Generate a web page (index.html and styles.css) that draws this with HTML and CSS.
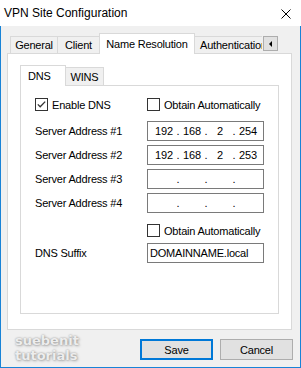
FILE: index.html
```html
<!DOCTYPE html>
<html>
<head>
<meta charset="utf-8">
<link rel="stylesheet" href="styles.css">
</head>
<body>
<div class="window">
  <div class="titlebar">
    <span class="title">VPN Site Configuration</span>
    <svg class="close" width="10" height="10" viewBox="0 0 10 10"><path d="M0.5 0.5 L9.5 9.5 M9.5 0.5 L0.5 9.5" stroke="#000" stroke-width="1" fill="none"/></svg>
  </div>
  <div class="body">
    <div class="tabs">
      <div class="tab tab-general">General</div>
      <div class="tab tab-client">Client</div>
      <div class="tab active">Name Resolution</div>
      <div class="tab tab-auth">Authentication</div>
      <div class="scroll-btn"><span class="tri"></span></div>
    </div>
    <div class="panel">
      <div class="subtabs">
        <div class="subtab active">DNS</div>
        <div class="subtab subtab-wins">WINS</div>
      </div>
      <div class="subpanel">
        <div class="row row-check">
          <div class="check label-col"><span class="box"><svg width="11" height="11" viewBox="0 0 11 11"><polyline points="1.8,5.4 4.2,7.8 9.2,2.6" fill="none" stroke="#333" stroke-width="1.3"/></svg></span>Enable DNS</div>
          <div class="check"><span class="box"></span>Obtain Automatically</div>
        </div>
        <div class="row row-field first">
          <span class="label-col">Server Address #1</span>
          <div class="field ip"><span>192</span><span>.</span><span>168</span><span>.</span><span>2</span><span>.</span><span>254</span></div>
        </div>
        <div class="row row-field">
          <span class="label-col">Server Address #2</span>
          <div class="field ip"><span>192</span><span>.</span><span>168</span><span>.</span><span>2</span><span>.</span><span>253</span></div>
        </div>
        <div class="row row-field">
          <span class="label-col">Server Address #3</span>
          <div class="field ip"><span></span><span>.</span><span></span><span>.</span><span></span><span>.</span><span></span></div>
        </div>
        <div class="row row-field">
          <span class="label-col">Server Address #4</span>
          <div class="field ip"><span></span><span>.</span><span></span><span>.</span><span></span><span>.</span><span></span></div>
        </div>
        <div class="row row-check second">
          <span class="label-col"></span>
          <div class="check"><span class="box"></span>Obtain Automatically</div>
        </div>
        <div class="row row-field suffix">
          <span class="label-col">DNS Suffix</span>
          <div class="field text">DOMAINNAME.local</div>
        </div>
      </div>
    </div>
    <div class="footer">
      <div class="watermark">suebenit<br>tutorials</div>
      <div class="buttons">
        <button class="btn primary">Save</button>
        <button class="btn">Cancel</button>
      </div>
    </div>
  </div>
</div>
</body>
</html>
```
FILE: styles.css
```css
html, body {
  margin: 0;
  padding: 0;
}
body {
  width: 301px;
  height: 368px;
  overflow: hidden;
  background: #fff;
  color: #000;
  font-family: "Liberation Sans", Arial, sans-serif;
  font-size: 11px;
  letter-spacing: -0.2px;
}
.window {
  width: 301px;
  height: 368px;
}
.titlebar {
  height: 26px;
  box-sizing: border-box;
  display: flex;
  align-items: center;
  justify-content: space-between;
  padding: 0 10px 0 4px;
  background: #fff;
}
.title {
  font-size: 12px;
  letter-spacing: 0;
}
.close {
  display: block;
  margin-top: 2px;
}
.body {
  height: 342px;
  box-sizing: border-box;
  border: 1px solid #1883d7;
  border-top: none;
  background: #f0f0f0;
  padding: 7px 7px 0 6px;
}
.tabs {
  display: flex;
  align-items: flex-end;
  height: 20px;
  padding-left: 3px;
}
.tab {
  height: 17px;
  box-sizing: border-box;
  border: 1px solid #d9d9d9;
  border-bottom: none;
  background: #f0f0f0;
  display: flex;
  align-items: center;
  justify-content: center;
  white-space: nowrap;
  margin-left: -1px;
  flex: none;
}
.tab-general {
  width: 48px;
  margin-left: 0;
}
.tab-client {
  width: 43px;
}
.tab.active {
  width: 96px;
  height: 21px;
  margin-bottom: -1px;
  padding-bottom: 1px;
  background: #fff;
  position: relative;
  z-index: 1;
}
.tab-auth {
  width: 68px;
  border-right: none;
  overflow: hidden;
  justify-content: flex-start;
  padding-left: 5px;
}
.scroll-btn {
  width: 15px;
  height: 15px;
  box-sizing: border-box;
  margin-left: 1px;
  align-self: flex-start;
  margin-top: 3px;
  border: 1px solid #adadad;
  background: #e1e1e1;
  display: flex;
  align-items: center;
  justify-content: center;
  flex: none;
}
.tri {
  width: 0;
  height: 0;
  border-top: 3px solid transparent;
  border-bottom: 3px solid transparent;
  border-right: 3px solid #000;
  margin-left: -1px;
}
.panel {
  width: 285px;
  height: 277px;
  box-sizing: border-box;
  border: 1px solid #d9d9d9;
  background: #fff;
  padding: 11px 0 0 12px;
}
.subtabs {
  display: flex;
  align-items: flex-end;
  height: 20px;
}
.subtab {
  height: 18px;
  box-sizing: border-box;
  border: 1px solid #d9d9d9;
  border-bottom: none;
  background: #f0f0f0;
  display: flex;
  align-items: center;
  justify-content: center;
  flex: none;
}
.subtab.active {
  width: 46px;
  height: 21px;
  margin-bottom: -1px;
  background: #fff;
  justify-content: flex-start;
  padding-left: 7px;
  position: relative;
  z-index: 1;
}
.subtab-wins {
  width: 39px;
  margin-left: -1px;
}
.subpanel {
  width: 259px;
  height: 229px;
  box-sizing: border-box;
  border: 1px solid #d9d9d9;
  background: #fff;
  padding: 11px 0 0 14px;
}
.row {
  display: flex;
  align-items: center;
}
.row-check {
  height: 15px;
}
.row-check.second {
  margin-top: 10px;
}
.row-field {
  height: 20px;
  margin-top: 4px;
}
.row-field.first {
  margin-top: 9px;
}
.row-field.suffix {
  margin-top: 5px;
}
.label-col {
  width: 112px;
  flex: none;
}
.check {
  display: flex;
  align-items: center;
}
.box {
  width: 13px;
  height: 13px;
  box-sizing: border-box;
  border: 1px solid #333;
  background: #fff;
  margin-right: 4px;
  flex: none;
}
.box svg {
  display: block;
}
.field {
  width: 117px;
  height: 20px;
  box-sizing: border-box;
  border: 1px solid #7a7a7a;
  background: #fff;
  flex: none;
}
.ip {
  display: grid;
  grid-template-columns: 24px 4px 24px 4px 24px 4px 24px;
  align-items: center;
  text-align: center;
  padding-left: 4px;
}
.text {
  display: flex;
  align-items: center;
  padding-left: 2px;
}
.footer {
  display: flex;
  justify-content: space-between;
  align-items: flex-start;
  padding-left: 8px;
}
.watermark {
  margin-top: 3px;
  font-family: "DejaVu Sans", Verdana, sans-serif;
  font-weight: bold;
  font-size: 13px;
  line-height: 15px;
  letter-spacing: 0;
  color: #ededed;
  text-shadow: 0 0 2px rgba(0, 0, 0, 0.35), 1px 1px 3px rgba(0, 0, 0, 0.25);
}
.buttons {
  display: flex;
  gap: 7px;
  margin-top: 9px;
}
.btn {
  width: 73px;
  height: 21px;
  box-sizing: border-box;
  border: 1px solid #adadad;
  background: #e1e1e1;
  color: #000;
  font-family: inherit;
  font-size: 11px;
  letter-spacing: -0.2px;
  padding: 0;
  margin: 0;
}
.btn.primary {
  border: 2px solid #0078d7;
}
```
